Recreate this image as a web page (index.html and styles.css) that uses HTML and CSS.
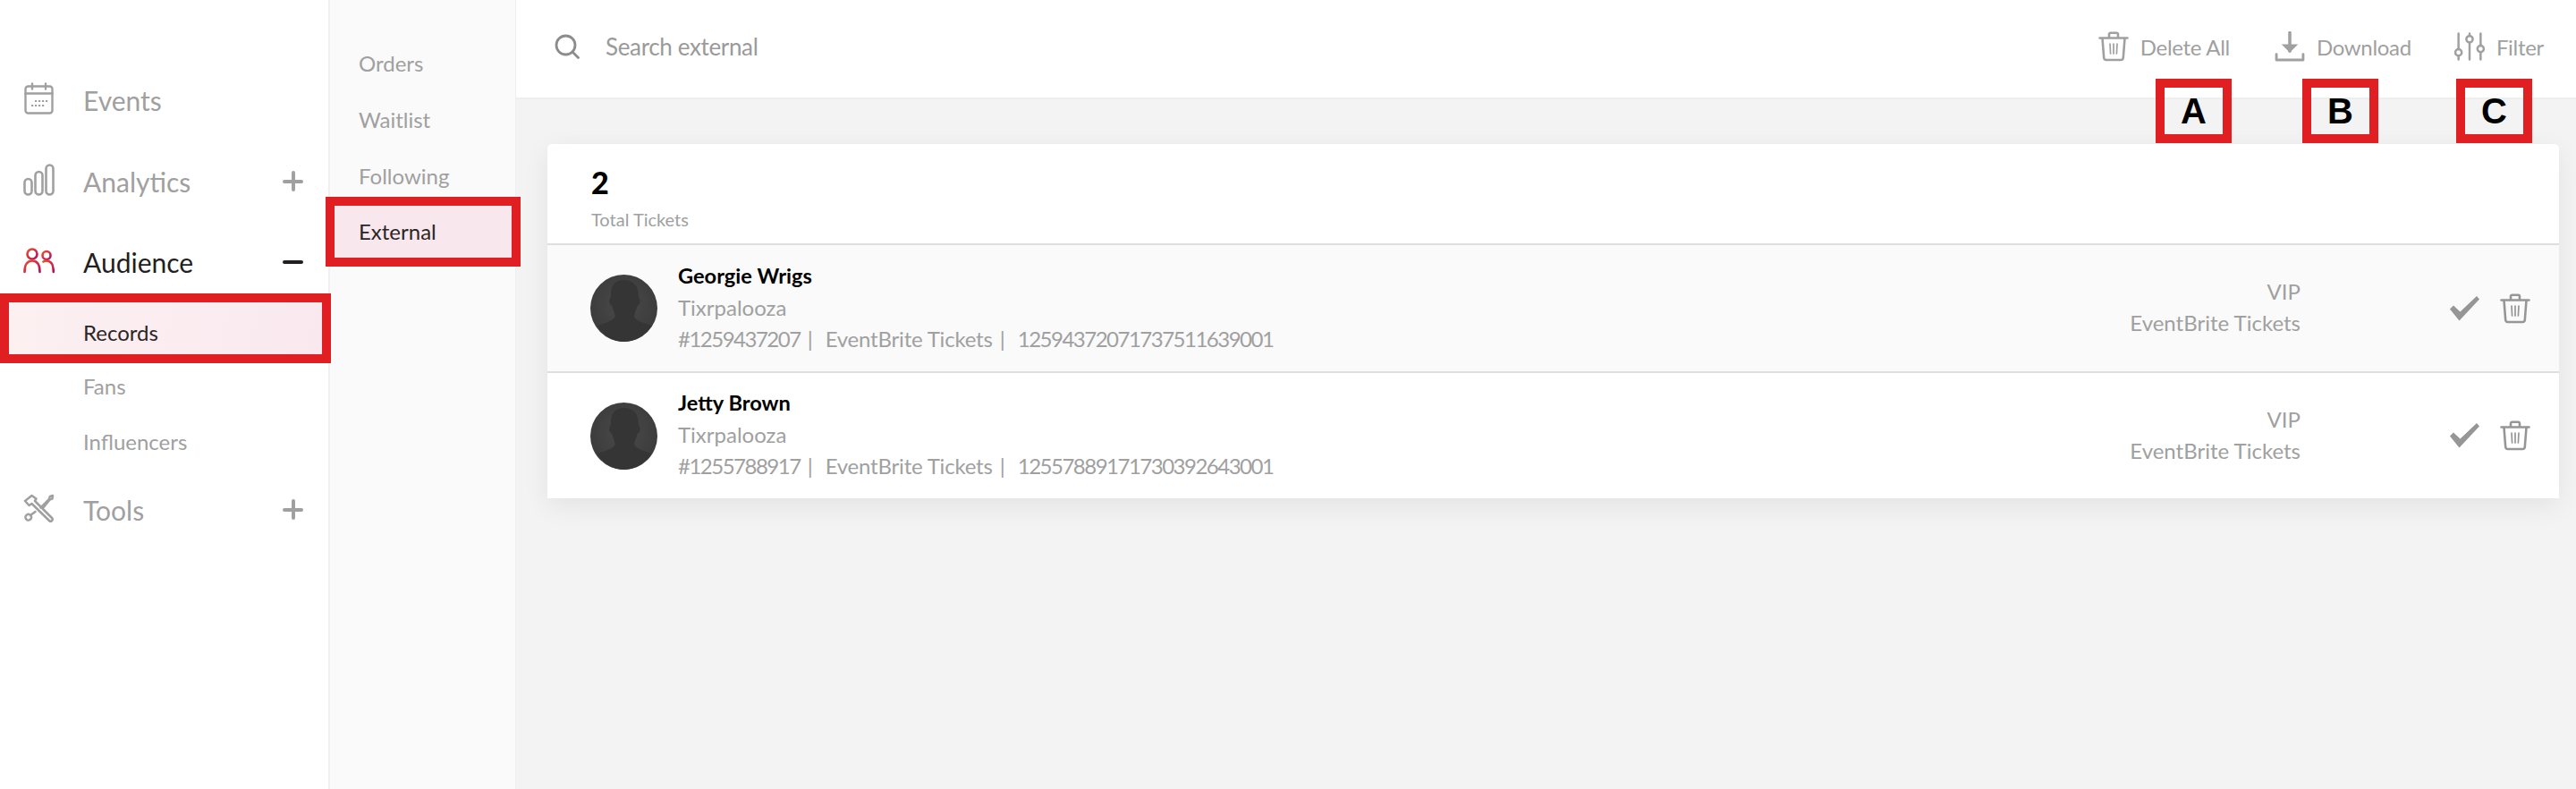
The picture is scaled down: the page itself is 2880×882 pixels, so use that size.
FILE: index.html
```html
<!DOCTYPE html>
<html lang="en">
<head>
<meta charset="utf-8">
<title>External tickets</title>
<link rel="stylesheet" href="styles.css">
</head>
<body>
<svg class="sprite" width="0" height="0" aria-hidden="true">
  <defs>
    <linearGradient id="peopleGrad" x1="0" y1="0" x2="1" y2="1">
      <stop offset="0" stop-color="#ee4a2c"/>
      <stop offset="1" stop-color="#b3125f"/>
    </linearGradient>
    <radialGradient id="avatarGrad" cx="0.5" cy="0.45" r="0.6">
      <stop offset="0" stop-color="#4a4a4a"/>
      <stop offset="1" stop-color="#3a3a3a"/>
    </radialGradient>
    <symbol id="trash" viewBox="0 0 34 34">
      <path d="M1.500 7.500h31M12 7V3.500c0-1 .7-1.700 1.700-1.700h6.600c1 0 1.700.7 1.700 1.700V7M4.500 8l1.700 21.500c.1 1.600 1 2.500 2.600 2.500h16.400c1.600 0 2.500-.9 2.600-2.500L29.500 8" fill="none" stroke="currentColor" stroke-width="2.600" stroke-linecap="round" stroke-linejoin="round"/>
      <path d="M13 14l.6 11M17 14v11M21 14l-.6 11" fill="none" stroke="currentColor" stroke-width="1.700" stroke-linecap="round"/>
    </symbol>
    <symbol id="check" viewBox="0 0 33 28">
      <path d="M0 14.500l4-4 7.500 7L30 0l3 3.500L10.500 27.500z" fill="currentColor"/>
    </symbol>
    <symbol id="avatar" viewBox="0 0 75 75">
      <circle cx="37.500" cy="37.500" r="37.500" fill="url(#avatarGrad)"/>
      <path d="M37.500 6c-11 0-15 8-14.500 17 .2 3-2.500 4-1.800 8 .5 2.500 2 3 3 4 1.500 5 3 8 3.500 11.500-1 4-7 6.500-19.500 10.500C14.500 68 25 75 37.500 75S60.500 68 68.500 57c-12.500-4-18.500-6.500-19.500-10.500.5-3.500 2-6.500 3.500-11.500 1-1 2.500-1.500 3-4 .7-4-2-5-1.800-8C54.200 14 48.500 6 37.500 6z" fill="#353535"/>
    </symbol>
  </defs>
</svg>

<div class="app">
  <nav class="sidebar">
    <a class="nav-item">
      <svg class="nav-icon" viewBox="0 0 35 36"><g fill="none" stroke="#a0a0a0" stroke-width="2.400" stroke-linecap="round"><rect x="2.500" y="4.500" width="30" height="30" rx="3"/><path d="M2.500 12.500h30M10 1.500v6M25 1.500v6"/></g><g fill="#a0a0a0"><rect x="13" y="20" width="2.200" height="2"/><rect x="17" y="20" width="2.200" height="2"/><rect x="21" y="20" width="2.200" height="2"/><rect x="25" y="20" width="2.200" height="2"/><rect x="9" y="25" width="2.200" height="2"/><rect x="13" y="25" width="2.200" height="2"/><rect x="17" y="25" width="2.200" height="2"/><rect x="21" y="25" width="2.200" height="2"/></g></svg>
      <span class="nav-label">Events</span>
    </a>
    <a class="nav-item nav-item-gap">
      <svg class="nav-icon" viewBox="0 0 35 36"><g fill="none" stroke="#a0a0a0" stroke-width="2.600"><rect x="1.500" y="17" width="8" height="17.500" rx="4"/><rect x="13.500" y="9" width="8" height="25.500" rx="4"/><rect x="25.500" y="1.500" width="8" height="33" rx="4"/></g></svg>
      <span class="nav-label">Analytics</span>
      <span class="sign sign-plus"></span>
    </a>
    <a class="nav-item nav-item-open">
      <svg class="nav-icon" viewBox="0 0 35 28"><g fill="none" stroke="url(#peopleGrad)" stroke-width="2.600" stroke-linecap="round"><circle cx="10" cy="7" r="5.500"/><path d="M1.500 27c0-8 3-12.500 8.500-12.500S18.500 19 18.500 27"/><circle cx="26" cy="8.500" r="4.500"/><path d="M22.500 15.500c1-.7 2.200-1 3.500-1 5 0 7.800 4.500 7.800 12.500"/></g></svg>
      <span class="nav-label nav-label-active">Audience</span>
      <span class="sign sign-minus"></span>
    </a>
    <div class="subnav-list">
      <a class="sub-item sub-item-active">Records</a>
      <a class="sub-item">Fans</a>
      <a class="sub-item">Influencers</a>
    </div>
    <a class="nav-item nav-item-last">
      <svg class="nav-icon" viewBox="0 0 35 31"><g fill="none" stroke="#a0a0a0" stroke-width="2.500" stroke-linecap="round" stroke-linejoin="round"><path d="M2 7.500L9.500 1.500l5 3.500-1.500 2.500 19 19c1 1 1 2 0 3s-2 1-3 0L9.500 10.500 6.500 12.500z"/><path d="M19.500 15L29 5.500l.8-3 3.200-1-.5 3.500-3 1.200L22 15.500M13.500 19.500L8 23.500"/><rect x="2.500" y="22.500" width="6.500" height="6.500" rx="3" transform="rotate(-35 5.700 25.700)"/></g></svg>
      <span class="nav-label">Tools</span>
      <span class="sign sign-plus"></span>
    </a>
  </nav>

  <aside class="secondary">
    <a class="sec-item">Orders</a>
    <a class="sec-item">Waitlist</a>
    <a class="sec-item">Following</a>
    <a class="sec-item sec-item-active">External</a>
  </aside>

  <main class="main">
    <header class="topbar">
      <div class="search">
        <svg class="search-icon" viewBox="0 0 28 28"><circle cx="12.500" cy="12.500" r="10.500" fill="none" stroke="#8c8c8c" stroke-width="2.800"/><path d="M20 20l6.500 6.500" stroke="#8c8c8c" stroke-width="2.800" stroke-linecap="round"/></svg>
        <span class="search-text">Search external</span>
      </div>
      <div class="actions">
        <a class="action action-delete"><svg class="action-icon"><use href="#trash"/></svg><span>Delete All</span></a>
        <a class="action action-download"><svg class="action-icon" viewBox="0 0 32 33"><path d="M16 1.500v20" stroke="currentColor" stroke-width="3.400" stroke-linecap="round" fill="none"/><path d="M7 14l9 9 9-9z" fill="currentColor"/><path d="M1.500 25v6h29v-6" fill="none" stroke="currentColor" stroke-width="2.800" stroke-linecap="round" stroke-linejoin="round"/></svg><span>Download</span></a>
        <a class="action"><svg class="action-icon" viewBox="0 0 33 31"><g fill="none" stroke="currentColor" stroke-width="2.400" stroke-linecap="round"><path d="M4.500 1.500v17M4.500 25.500v4M16.500 1.500v2M16.500 11v18.500M28.500 1.500v13M28.500 22v7.500"/><circle cx="4.500" cy="22" r="3.500"/><circle cx="16.500" cy="7.500" r="3.500"/><circle cx="28.500" cy="18" r="3.500"/></g></svg><span>Filter</span></a>
      </div>
    </header>

    <div class="callout callout-a">A</div>
    <div class="callout callout-b">B</div>
    <div class="callout callout-c">C</div>

    <section class="card">
      <div class="card-head">
        <div class="total">2</div>
        <div class="total-label">Total Tickets</div>
      </div>
      <article class="ticket ticket-shaded">
        <svg class="avatar"><use href="#avatar"/></svg>
        <div class="ticket-info">
          <div class="ticket-name">Georgie Wrigs</div>
          <div class="ticket-line">Tixrpalooza</div>
          <div class="ticket-line"><span class="num">#1259437207</span><span class="sep">|</span><span class="src">EventBrite Tickets</span><span class="sep">|</span><span class="num">12594372071737511639001</span></div>
        </div>
        <div class="ticket-type">
          <div>VIP</div>
          <div>EventBrite Tickets</div>
        </div>
        <div class="ticket-tools">
          <svg class="tool-check"><use href="#check"/></svg>
          <svg class="tool-trash"><use href="#trash"/></svg>
        </div>
      </article>
      <article class="ticket ticket-last">
        <svg class="avatar"><use href="#avatar"/></svg>
        <div class="ticket-info">
          <div class="ticket-name">Jetty Brown</div>
          <div class="ticket-line">Tixrpalooza</div>
          <div class="ticket-line"><span class="num">#1255788917</span><span class="sep">|</span><span class="src">EventBrite Tickets</span><span class="sep">|</span><span class="num">12557889171730392643001</span></div>
        </div>
        <div class="ticket-type">
          <div>VIP</div>
          <div>EventBrite Tickets</div>
        </div>
        <div class="ticket-tools">
          <svg class="tool-check"><use href="#check"/></svg>
          <svg class="tool-trash"><use href="#trash"/></svg>
        </div>
      </article>
    </section>
  </main>
</div>
</body>
</html>
```

FILE: styles.css
```css
* { box-sizing: border-box; }

html, body {
  margin: 0;
  height: 100%;
  overflow: hidden;
}

body {
  background: #f3f3f3;
  font-family: Lato, "Liberation Sans", sans-serif;
  color: #a0a0a0;
}

.sprite { position: absolute; }

.app {
  display: flex;
  height: 882px;
}

/* primary sidebar */
.sidebar {
  flex: 0 0 369px;
  padding-top: 68px;
  background: #fff;
  border-right: 2px solid #f0f0f0;
}

.nav-item {
  display: flex;
  align-items: center;
  height: 90px;
  padding: 0 28px 3px 26px;
}

.nav-item-gap { margin-top: 1px; }

.nav-item-open {
  height: 79px;
  padding-top: 11px;
}

.nav-item-last { height: 94px; }

.nav-icon {
  flex: 0 0 35px;
  width: 35px;
  height: 38px;
  margin-bottom: 4px;
}

.nav-label {
  flex: 1;
  margin-left: 32px;
  font-size: 30px;
  color: #a0a0a0;
}

.nav-label-active { color: #231f20; }

.sign {
  position: relative;
  width: 23px;
  height: 23px;
}

.sign::before {
  content: "";
  position: absolute;
  left: 0;
  right: 0;
  top: 10px;
  height: 4px;
  border-radius: 2px;
  background: #a0a0a0;
}

.sign-plus::after {
  content: "";
  position: absolute;
  top: 0;
  bottom: 0;
  left: 10px;
  width: 4px;
  border-radius: 2px;
  background: #a0a0a0;
}

.sign-minus::before { background: #231f20; }

.sub-item {
  display: flex;
  align-items: center;
  height: 62px;
  padding-left: 93px;
  font-size: 24px;
  color: #a0a0a0;
}

.sub-item-active {
  position: relative;
  z-index: 1;
  height: 78px;
  margin-right: -3px;
  margin-bottom: -6px;
  padding: 8px 0 0 83px;
  border: 10px solid #e01f23;
  background: linear-gradient(100deg, #fcf0f1, #f9e9ef);
  color: #2b2526;
}

/* secondary column */
.secondary {
  flex: 0 0 208px;
  padding-top: 39px;
  background: #fafafa;
  border-right: 1px solid #efefef;
}

.sec-item {
  display: flex;
  align-items: center;
  height: 63px;
  padding-left: 32px;
  font-size: 24px;
  color: #a0a0a0;
}

.sec-item-active {
  position: relative;
  z-index: 1;
  height: 78px;
  margin: -8px -6px 0 -5px;
  padding: 0 0 1px 27px;
  border: 10px solid #e01f23;
  background: #f8e8ee;
  color: #2b2526;
}

/* main column */
.main {
  position: relative;
  flex: 1;
  min-width: 0;
}

.topbar {
  display: flex;
  align-items: center;
  justify-content: space-between;
  height: 111px;
  padding: 0 36px 5px 43px;
  background: #fff;
  border-bottom: 2px solid #eee;
}

.search {
  display: flex;
  align-items: center;
  gap: 29px;
}

.search-icon {
  width: 28px;
  height: 28px;
}

.search-text {
  font-size: 26px;
  letter-spacing: -.35px;
  color: #9a9a9a;
}

.actions {
  display: flex;
  align-items: center;
  font-size: 24px;
  letter-spacing: -.3px;
  color: #a0a0a0;
}

.action {
  display: flex;
  align-items: center;
  gap: 13px;
}

.action-delete { margin-right: 50px; }
.action-download { margin-right: 48px; }

.action-icon {
  width: 34px;
  height: 34px;
}

.callout {
  position: absolute;
  top: 88px;
  z-index: 2;
  display: flex;
  align-items: center;
  justify-content: center;
  width: 85px;
  height: 72px;
  border: 10px solid #e01f23;
  font: bold 40px "Liberation Sans", Arial, sans-serif;
  color: #000;
}

.callout-a { left: 1833px; }
.callout-b { left: 1997px; }
.callout-c { left: 2169px; }

/* tickets card */
.card {
  margin: 50px 19px 0 35px;
  border-radius: 5px 5px 0 0;
  background: #fff;
  box-shadow: 0 8px 30px rgba(0, 0, 0, .07);
}

.card-head {
  height: 111px;
  padding: 24px 49px 0;
}

.total {
  height: 38px;
  font-size: 34px;
  font-weight: 900;
  line-height: 38px;
  color: #000;
}

.total-label {
  margin-top: 10px;
  font-size: 20px;
  line-height: 24px;
}

.ticket {
  display: flex;
  align-items: center;
  height: 143px;
  padding: 0 32px 0 48px;
  border-top: 2px solid #dedede;
}

.ticket-last { height: 142px; }

.ticket-shaded { background: #fafafa; }

.avatar {
  flex: 0 0 75px;
  width: 75px;
  height: 75px;
}

.ticket-info {
  flex: 1;
  margin-left: 23px;
  margin-bottom: 4px;
}

.ticket-name {
  font-size: 23.6px;
  font-weight: 700;
  line-height: 36px;
  color: #000;
}

.ticket-line {
  font-size: 24px;
  line-height: 35px;
  color: #a0a0a0;
}

.num { letter-spacing: -1.5px; }

.src { letter-spacing: -.2px; }

.sep { margin: 0 14px 0 8px; }

.ticket-type {
  margin-bottom: 3px;
  margin-right: -1px;
  font-size: 24px;
  line-height: 35px;
  text-align: right;
}

.ticket-tools {
  display: flex;
  align-items: center;
  gap: 23px;
  margin-left: 168px;
  color: #969696;
}

.tool-check {
  width: 33px;
  height: 28px;
}

.tool-trash {
  width: 34px;
  height: 34px;
}
```
